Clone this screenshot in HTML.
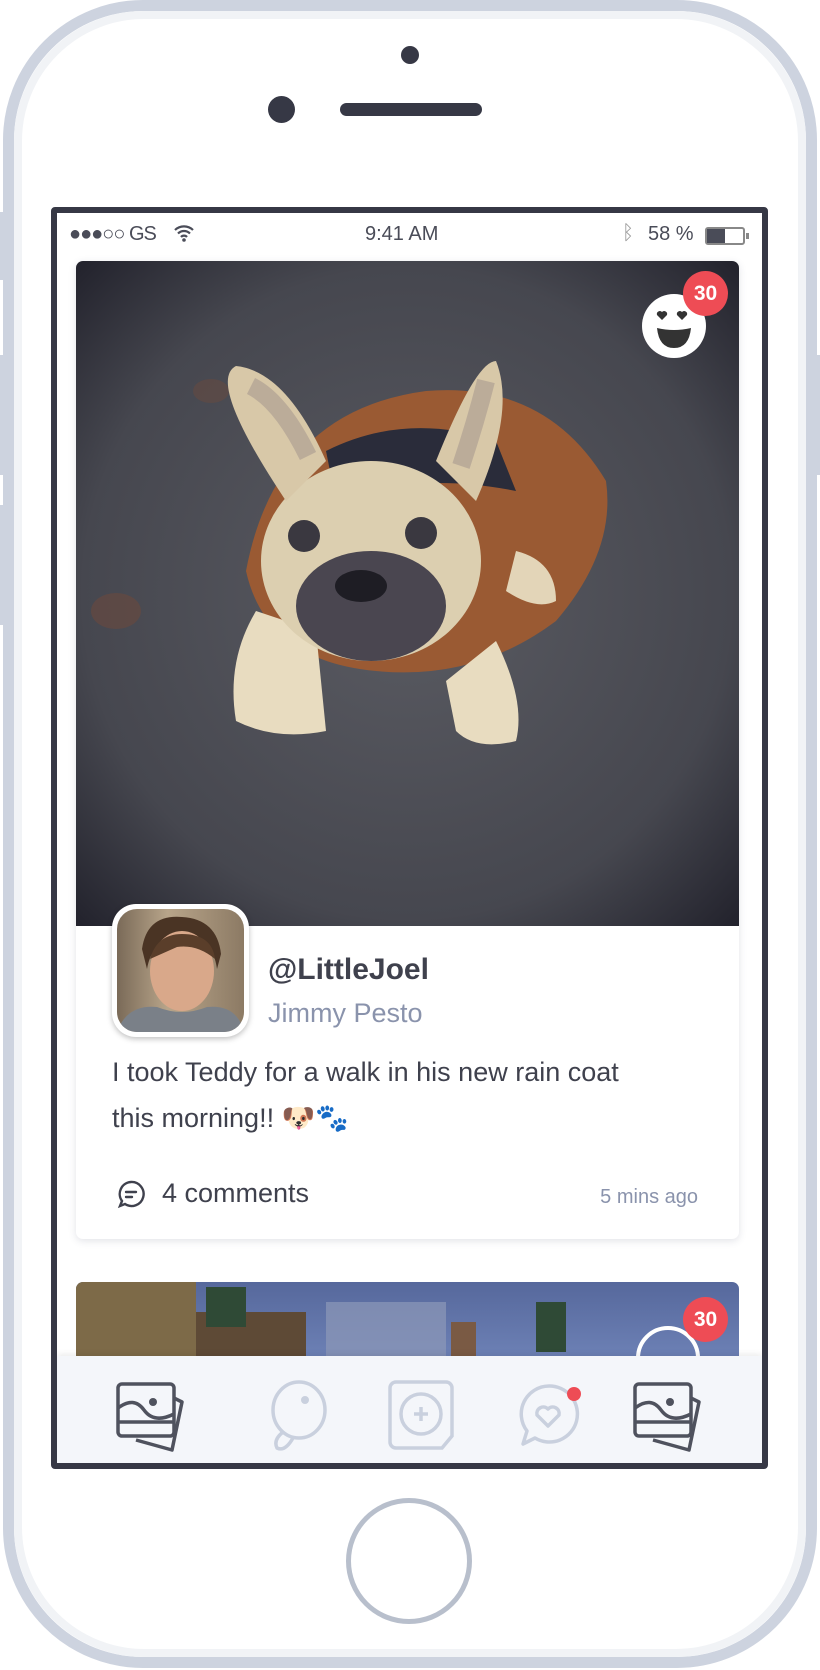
<!DOCTYPE html>
<html><head><meta charset="utf-8"><style>
*{margin:0;padding:0;box-sizing:border-box}
body{width:820px;height:1670px;background:#fff;position:relative;overflow:hidden;font-family:"Liberation Sans","DejaVu Sans",sans-serif}
.abs{position:absolute}
</style></head><body>
<div class="abs" style="left:3px;top:0;width:814px;height:1668px;border:11px solid #cdd3df;border-radius:140px;background:#fff"></div>
<div class="abs" style="left:14px;top:11px;width:792px;height:1646px;border:8px solid #f1f3f6;border-radius:130px"></div>
<div class="abs" style="left:0;top:212px;width:4px;height:68px;background:#cdd3df"></div>
<div class="abs" style="left:0;top:355px;width:4px;height:120px;background:#cdd3df"></div>
<div class="abs" style="left:0;top:505px;width:4px;height:120px;background:#cdd3df"></div>
<div class="abs" style="left:816px;top:355px;width:4px;height:120px;background:#cdd3df"></div>
<div class="abs" style="left:401px;top:46px;width:18px;height:18px;border-radius:50%;background:#363845"></div>
<div class="abs" style="left:268px;top:96px;width:27px;height:27px;border-radius:50%;background:#363845"></div>
<div class="abs" style="left:340px;top:103px;width:142px;height:13px;border-radius:7px;background:#363845"></div>
<div class="abs" style="left:51px;top:207px;width:717px;height:1262px;border:6px solid #363845;border-radius:4px;background:#fff;overflow:hidden">
 <div class="abs" style="left:0;top:0;width:705px;height:40px;font-size:20px;color:#4a4c58">
  <span class="abs" style="left:12px;top:10px;letter-spacing:-1px">●●●○○ GS</span>
  <svg class="abs" style="left:116px;top:11px" width="22" height="18" viewBox="0 0 22 18"><path d="M2 6a13 13 0 0 1 18 0M5 9.5a8.5 8.5 0 0 1 12 0M8 13a4 4 0 0 1 6 0" stroke="#4a4c58" stroke-width="2.2" fill="none"/><circle cx="11" cy="16" r="1.8" fill="#4a4c58"/></svg>
  <span class="abs" style="left:308px;top:10px">9:41 AM</span>
  <span class="abs" style="left:565px;top:9px;color:#999">ᛒ</span>
  <span class="abs" style="left:591px;top:10px">58 %</span>
  <div class="abs" style="left:648px;top:14px;width:40px;height:18px;border:2px solid #888;border-radius:3px"><div style="width:18px;height:14px;background:#4a4c58"></div></div>
  <div class="abs" style="left:689px;top:20px;width:3px;height:6px;background:#888"></div>
 </div>
 <div class="abs" style="left:19px;top:48px;width:663px;height:978px;background:#fff;border-radius:7px;box-shadow:0 2px 8px rgba(60,70,100,.15);overflow:hidden">
  <svg class="abs" style="left:0;top:0" width="663" height="665" viewBox="0 0 663 665">
   <defs><radialGradient id="v" cx="50%" cy="50%" r="70%"><stop offset="0" stop-color="#5a5b62"/><stop offset=".7" stop-color="#46474f"/><stop offset="1" stop-color="#23232d"/></radialGradient></defs>
   <rect width="663" height="665" fill="url(#v)"/>
   <ellipse cx="40" cy="350" rx="25" ry="18" fill="#6a4a3e" opacity=".6"/>
   <ellipse cx="135" cy="130" rx="18" ry="12" fill="#6a4a3e" opacity=".5"/>
   <path d="M170 310 Q200 150 350 130 Q470 120 530 220 Q540 290 480 360 Q400 420 300 410 Q190 400 170 310Z" fill="#9a5a33"/>
   <path d="M250 190 Q330 150 420 180 L440 230 Q340 210 260 240Z" fill="#2a2c3a"/>
   <path d="M160 460 Q150 400 180 350 L240 370 L250 470 Q200 480 160 460Z" fill="#e8dcc0"/>
   <path d="M370 420 L420 380 Q450 440 440 480 Q400 490 380 470Z" fill="#e8dcc0"/>
   <path d="M440 290 Q480 300 480 340 Q460 350 430 330Z" fill="#e3d5b8"/>
   <ellipse cx="295" cy="300" rx="110" ry="100" fill="#dccfb0"/>
   <path d="M210 240 Q130 120 160 105 Q210 110 250 200Z" fill="#d8c8a8"/>
   <path d="M360 200 Q400 100 420 100 Q440 150 400 240Z" fill="#d8c8a8"/>
   <path d="M175 125 Q205 140 232 195" stroke="#a89a90" stroke-width="18" fill="none" opacity=".6"/>
   <path d="M410 120 Q400 160 385 205" stroke="#a89a90" stroke-width="18" fill="none" opacity=".6"/>
   <ellipse cx="295" cy="345" rx="75" ry="55" fill="#4a4650"/>
   <circle cx="228" cy="275" r="16" fill="#3a3840"/><circle cx="345" cy="272" r="16" fill="#3a3840"/>
   <ellipse cx="285" cy="325" rx="26" ry="16" fill="#1e1d24"/>
  </svg>
  <div class="abs" style="left:566px;top:33px;width:64px;height:64px;border-radius:50%;background:#fff">
   <svg width="64" height="64" viewBox="0 0 64 64"><path d="M20 26l-5-5a3 3 0 0 1 5-3 3 3 0 0 1 5 3z M40 26l-5-5a3 3 0 0 1 5-3 3 3 0 0 1 5 3z" fill="#333"/><path d="M15 34 Q32 38 49 34 Q47 54 32 54 Q17 54 15 34Z" fill="#333"/></svg>
  </div>
  <div class="abs" style="left:607px;top:10px;width:45px;height:45px;border-radius:50%;background:#ee4c55;color:#fff;font-weight:bold;font-size:21px;text-align:center;line-height:45px">30</div>
  <div class="abs" style="left:36px;top:643px;width:137px;height:133px;border-radius:24px;background:#fff;box-shadow:0 2px 6px rgba(0,0,0,.25);padding:5px">
   <div style="width:127px;height:123px;border-radius:20px;overflow:hidden;background:linear-gradient(90deg,#7a6a58,#b8a58a 40%,#8c7a64)">
    <svg width="127" height="123" viewBox="0 0 127 123"><path d="M25 40 Q30 5 65 8 Q100 10 104 45 L100 60 Q95 25 65 28 Q35 30 30 60Z" fill="#4a3424"/><ellipse cx="65" cy="62" rx="32" ry="40" fill="#d9a88a"/><path d="M33 50 Q40 25 65 25 Q95 25 98 50 Q80 35 60 38Z" fill="#5a3e2a"/><path d="M0 123 Q10 95 40 98 Q65 108 90 98 Q120 95 127 123Z" fill="#7a8088"/></svg>
   </div>
  </div>
  <div class="abs" style="left:192px;top:692px;font-size:30px;font-weight:bold;color:#3f414d">@LittleJoel</div>
  <div class="abs" style="left:192px;top:737px;font-size:27px;color:#8a93ac">Jimmy Pesto</div>
  <div class="abs" style="left:36px;top:788px;width:545px;font-size:27px;line-height:46px;color:#3f414d">I took Teddy for a walk in his new rain coat this morning!! 🐶🐾</div>
  <svg class="abs" style="left:40px;top:918px" width="30" height="30" viewBox="0 0 30 30"><path d="M15 3a12 12 0 1 1-6 22l-5 2 2-5A12 12 0 0 1 15 3z" stroke="#3f414d" stroke-width="2.4" fill="none"/><path d="M10 13h10M10 18h6" stroke="#3f414d" stroke-width="2.4" stroke-linecap="round"/></svg>
  <div class="abs" style="left:86px;top:917px;font-size:27px;color:#3f414d">4 comments</div>
  <div class="abs" style="right:41px;top:925px;font-size:20px;color:#8a93ac">5 mins ago</div>
 </div>
 <div class="abs" style="left:19px;top:1069px;width:663px;height:120px;border-radius:7px;overflow:hidden;background:linear-gradient(180deg,#56689c,#7a8fc4)">
  <div class="abs" style="left:0;top:0;width:120px;height:120px;background:#7d6a48"></div>
  <div class="abs" style="left:120px;top:30px;width:110px;height:90px;background:#5e4a36"></div>
  <div class="abs" style="left:130px;top:5px;width:40px;height:40px;background:#2f4a36"></div>
  <div class="abs" style="left:250px;top:20px;width:120px;height:60px;background:#8d98b8;opacity:.7"></div>
  <div class="abs" style="left:375px;top:40px;width:25px;height:80px;background:#7a5a44"></div>
  <div class="abs" style="left:460px;top:20px;width:30px;height:50px;background:#2f4a36"></div>
  <div class="abs" style="left:560px;top:44px;width:64px;height:64px;border-radius:50%;border:4px solid #fff"></div>
  <div class="abs" style="left:607px;top:15px;width:45px;height:45px;border-radius:50%;background:#ee4c55;color:#fff;font-weight:bold;font-size:21px;text-align:center;line-height:45px">30</div>
 </div>
 <div class="abs" style="left:0;top:1143px;width:705px;height:113px;background:#f4f6fa;box-shadow:0 -2px 6px rgba(0,0,0,.08)">
  <svg class="abs" style="left:57px;top:22px" width="76" height="76" viewBox="0 0 76 76"><g stroke="#4f525e" stroke-width="3.5" fill="none" stroke-linejoin="round"><path d="M8 6h48a4 4 0 0 1 4 4v44a4 4 0 0 1-4 4H8a4 4 0 0 1-4-4V10a4 4 0 0 1 4-4z"/><path d="M4 30 Q20 18 30 32 Q40 46 60 36M4 44h56"/><path d="M60 20l8 4-10 48-36-10"/></g><circle cx="39" cy="24" r="4" fill="#4f525e"/></svg>
  <svg class="abs" style="left:200px;top:22px" width="76" height="76" viewBox="0 0 76 76"><g stroke="#c9d0de" stroke-width="3.5" fill="none"><ellipse cx="42" cy="32" rx="26" ry="28"/><path d="M26 54 Q16 62 20 70 Q28 74 36 60"/></g><circle cx="48" cy="22" r="4" fill="#c9d0de"/></svg>
  <svg class="abs" style="left:327px;top:22px" width="76" height="76" viewBox="0 0 76 76"><g stroke="#c9d0de" stroke-width="3.5" fill="none"><path d="M12 4h50a6 6 0 0 1 6 6v48l-10 12H12a6 6 0 0 1-6-6V10a6 6 0 0 1 6-6z"/><circle cx="37" cy="36" r="20"/><path d="M37 29v14M30 36h14"/></g></svg>
  <svg class="abs" style="left:454px;top:22px" width="76" height="76" viewBox="0 0 76 76"><g stroke="#c9d0de" stroke-width="3.5" fill="none" stroke-linejoin="round"><path d="M38 8a28 28 0 1 1-14 52l-12 6 4-13A28 28 0 0 1 38 8z"/><path d="M37 48l-11-11a6.5 6.5 0 0 1 11-6 6.5 6.5 0 0 1 11 6z"/></g><circle cx="63" cy="16" r="7" fill="#ee4c55"/></svg>
  <svg class="abs" style="left:574px;top:22px" width="76" height="76" viewBox="0 0 76 76"><g stroke="#4f525e" stroke-width="3.5" fill="none" stroke-linejoin="round"><path d="M8 6h48a4 4 0 0 1 4 4v44a4 4 0 0 1-4 4H8a4 4 0 0 1-4-4V10a4 4 0 0 1 4-4z"/><path d="M4 30 Q20 18 30 32 Q40 46 60 36M4 44h56"/><path d="M60 20l8 4-10 48-36-10"/></g><circle cx="39" cy="24" r="4" fill="#4f525e"/></svg>
 </div>
</div>
<div class="abs" style="left:346px;top:1498px;width:126px;height:126px;border-radius:50%;border:5px solid #b8bfcc"></div>
</body></html>
